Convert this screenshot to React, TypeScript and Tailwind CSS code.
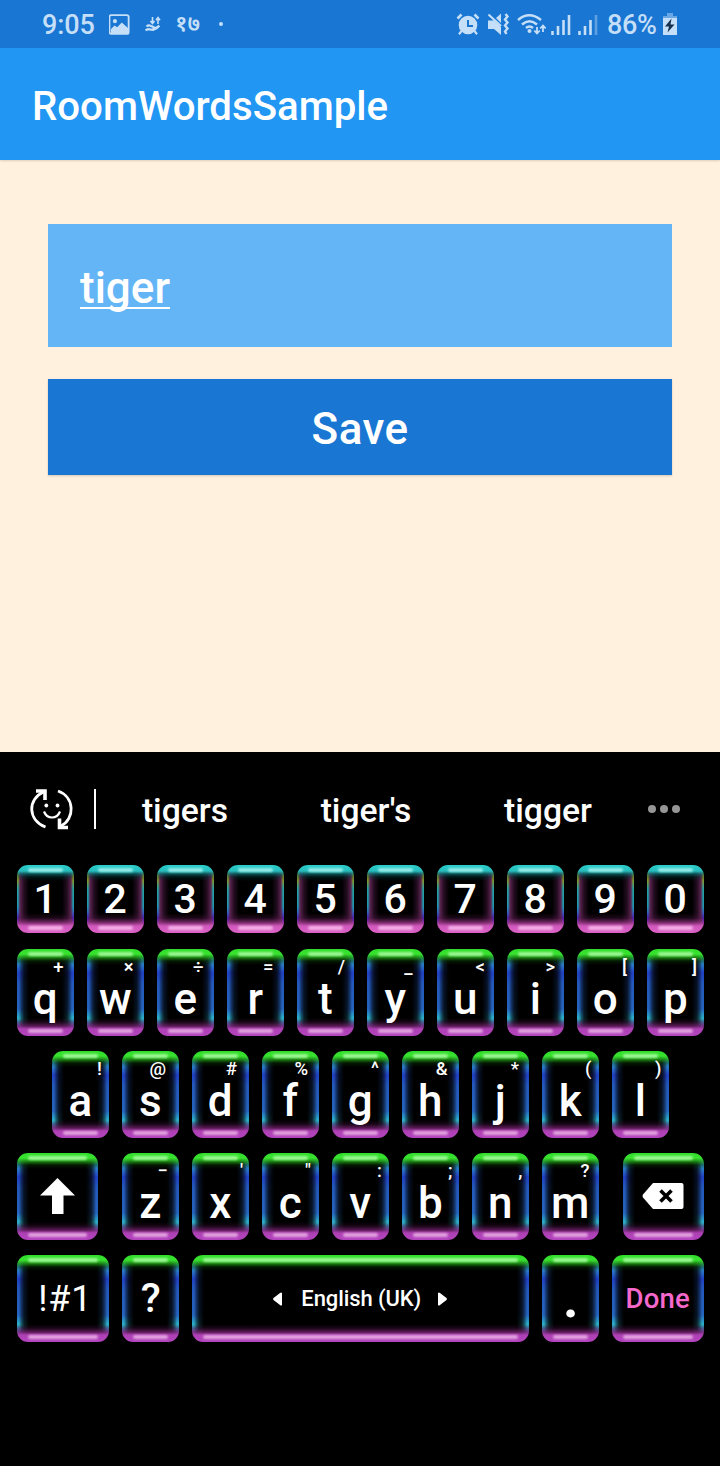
import React from "react";

const letterGlow =
  "bg-[linear-gradient(to_bottom,#30dc2c_0,#38e42e_5px,rgba(30,150,16,0.75)_9px,rgba(10,60,5,0.4)_12px,transparent_16px),linear-gradient(to_top,#b444c0_0,#ae40b4_7px,rgba(120,34,112,0.75)_10px,rgba(60,16,56,0.4)_14px,transparent_18px),linear-gradient(to_right,transparent_0,transparent_2px,rgba(0,0,0,0.4)_4px,rgba(0,0,0,0.8)_7px,#000_12px,#000_calc(100%-12px),rgba(0,0,0,0.8)_calc(100%-7px),rgba(0,0,0,0.4)_calc(100%-4px),transparent_calc(100%-2px),transparent_100%),linear-gradient(to_bottom,#2f9a8a_0,#2b86c8_14px,#2040c4_24px,#2358bc_34px,#2564bf_60px,#2cb8cc_70px,#7a50c8_80px)]";
const digitGlow =
  "bg-[linear-gradient(to_bottom,#2ad0cc_0,#27bcbc_6px,rgba(10,110,110,0.7)_9px,rgba(5,60,60,0.35)_12px,transparent_16px),linear-gradient(to_top,#dc62c8_0,#d058bc_7px,rgba(150,50,130,0.7)_11px,rgba(80,25,70,0.35)_15px,transparent_20px),linear-gradient(to_right,transparent_0,transparent_1px,#5a2450_3px,#240c20_7px,#000_12px,#000_calc(100%-12px),#240c20_calc(100%-7px),#5a2450_calc(100%-3px),transparent_calc(100%-1px),transparent_100%),linear-gradient(to_bottom,#2ad0cc_0,#a09a20_10px,#8d9a28_15px,#22a4a4_24px,#2096b0_42px,#4a20d8_54px,#b050d0_64px)]";

type KeyProps = {
  label?: string;
  hint?: string;
  hintRight?: string;
  digit?: boolean;
  width?: string;
  textStyle?: string;
  children?: React.ReactNode;
};

function Key({ label, hint, hintRight = "right-[9.5px]", digit = false, width = "w-[57px]", textStyle, children }: KeyProps) {
  const text = textStyle ?? (digit ? "text-[41px] leading-[69px] font-medium" : "mt-[29px] text-[44px] leading-[42px] font-medium");
  return (
    <div className={`flex shrink-0 items-start justify-center ${width} ${digit ? "h-[68px]" : "h-[87px]"}`}>
      <div
        className={`relative mr-[0.5px] flex flex-1 items-start justify-center rounded-[11px] text-white ${
          digit ? `h-[68px] ${digitGlow}` : `h-[86.5px] ${letterGlow}`
        }`}
      >
        <span className={`absolute inset-x-[11px] top-[3px] h-[4px] rounded-full blur-[1px] ${digit ? "bg-[#96ecea]" : "bg-[#9cf694]"}`} />
        <span className={`absolute inset-x-[11px] bottom-[3px] h-[4px] rounded-full blur-[1px] ${digit ? "bg-[#f4b0e6]" : "bg-[#e2a2de]"}`} />
        {hint && <span className={`absolute top-[7px] text-[18.5px] leading-[22px] font-medium ${hintRight}`}>{hint}</span>}
        {label && <span className={`relative block whitespace-nowrap ${text}`}>{label}</span>}
        {children}
      </div>
    </div>
  );
}

function StatusBar() {
  return (
    <div className="flex h-12 items-center bg-[#1976d2] text-[#c5dff8]">
      <span className="mt-[2px] ml-[42px] w-[54px] text-[27px] leading-[46px] font-medium tracking-[-0.1px]">9:05</span>
      <svg className="ml-[13px] h-[21px] w-[21px]" viewBox="0 0 23 22" preserveAspectRatio="none">
        <path d="M2.500 1.200h17q2 0 2 2v15.600q0 2-2 2h-17q-2 0-2-2V3.200q0-2 2-2Z" fill="none" stroke="currentColor" strokeWidth="2" />
        <circle cx="6.500" cy="7.500" r="2.200" fill="currentColor" />
        <path d="m2 16 4-4 3 2 5-5 7 6v5H2Z" fill="currentColor" />
      </svg>
      <svg className="ml-[15px] h-[16px] w-[18px]" viewBox="0 0 18 16" fill="none" stroke="currentColor">
        <path d="M7.500 1v6m-2-2 2 2.500L9.500 5M13 8V2m-2 2.200 2-2.700 2 2.700" strokeWidth="1.600" />
        <path d="M1.500 10.500c1.500-1.300 3-1.300 4.500-.6l2 .8c1.500.4 1 1.700-.5 1.500M9.500 12.800l5-3M.5 14.200l2.500-1 5 .6 3.500-1.600 2.500-2" strokeWidth="2.200" />
      </svg>
      <span className="ml-[12px] w-[26px] -translate-y-[2px] font-['Noto_Sans','Noto_Sans_Devanagari',sans-serif] text-[23px] leading-[44px] font-semibold">१७</span>
      <span className="ml-[18px] size-[4px] rounded-full bg-current" />
      <svg className="ml-[233px] h-[24px] w-[24px]" viewBox="0 0 24 24" fill="none" stroke="currentColor">
        <path d="m1.500 6.500 4-4M22.500 6.500l-4-4" strokeWidth="2.600" />
        <circle cx="12" cy="13" r="9.300" fill="currentColor" stroke="none" />
        <path d="m5.500 19-2.500 3.200M18.500 19l2.500 3.200" strokeWidth="2.200" />
        <path d="M12 8v6h5" stroke="#1976d2" strokeWidth="2" />
      </svg>
      <svg className="ml-[7px] h-[24px] w-[23px]" viewBox="0 0 23 24">
        <path d="M1 8.500h6l7 6.500v8l-7-6H1ZM9 6l5-4.500V11Z" fill="currentColor" />
        <path d="M1.500 2.500 14 14" stroke="currentColor" strokeWidth="2.200" />
        <path d="m18.500 2 2 2.500-2.500 3 2.500 3-2.500 3 2.500 3-2.500 3 1.500 2.500" fill="none" stroke="currentColor" strokeWidth="2.400" />
      </svg>
      <svg className="ml-[7px] h-[24px] w-[29px]" viewBox="0 0 29 24" fill="none" stroke="currentColor">
        <path d="M1 8q11-9.500 23 0M5 12.500q7.500-6.500 15 0M9 16q3.500-3 7 0" strokeWidth="2.400" />
        <circle cx="12.500" cy="19" r="2" fill="currentColor" stroke="none" />
        <path d="M20 15v6m-2.700-2.500 2.700 3 2.700-3M26 20v-6m-2.700 2.500 2.700-3 2.700 3" strokeWidth="1.800" />
      </svg>
      <svg className="mt-[1px] ml-[5px] h-[21px] w-[20px]" viewBox="0 0 20 21" stroke="currentColor" strokeWidth="2.600">
        <path d="M1.500 21v-4M7 21v-9M12.500 21V6M18 21V1" />
      </svg>
      <svg className="mt-[1px] ml-[7px] h-[21px] w-[20px]" viewBox="0 0 20 21" stroke="currentColor" strokeWidth="2.600">
        <path d="M1.500 21v-4M7 21v-9M12.500 21V6" />
        <path d="M18 21V1" opacity=".4" />
      </svg>
      <span className="mt-[2px] ml-[9px] w-[50px] text-[27px] leading-[46px] font-medium tracking-[-0.4px]">86%</span>
      <svg className="ml-[6px] h-[22px] w-[14px]" viewBox="0 0 14 22">
        <path d="M4 0h6v3h4v3H0V3h4Z" fill="#69a8e4" />
        <path d="M0 5h14v17H0Z" fill="currentColor" />
        <path d="M8.500 5.500 2 13.500h4L4.500 19.500l7-8H7.500Z" fill="#15314f" />
      </svg>
    </div>
  );
}

function Suggestions() {
  return (
    <div className="flex h-[113px] items-center text-[33.700px] font-medium text-white">
      <svg className="ml-[30px] h-[44px] w-[44px]" viewBox="0 0 44 44" fill="none" stroke="currentColor">
        <path d="M15.500 40C-2.500 33-2.500 12 13.500 5M28 4c17 6 17 28 3 35" strokeWidth="2.800" />
        <path d="M6 4h9v9M38 40.500h-8.500v-9" strokeWidth="3.600" />
        <circle cx="16.300" cy="18.500" r="1.900" fill="currentColor" stroke="none" />
        <circle cx="27.500" cy="18.500" r="1.900" fill="currentColor" stroke="none" />
        <path d="M14 24.500c3 8 13 8 16 0" strokeWidth="2.200" />
      </svg>
      <span className="ml-[20px] h-10 w-[2px] bg-white" />
      <span className="mt-[5px] w-[178px] text-center">tigers</span>
      <span className="mt-[5px] w-[184px] text-center">tiger's</span>
      <span className="mt-[5px] w-[180px] text-center">tigger</span>
      <span className="mt-px ml-[10px] flex gap-[4px]">
        <i className="size-[8px] rounded-full bg-[#969696]" />
        <i className="size-[8px] rounded-full bg-[#969696]" />
        <i className="size-[8px] rounded-full bg-[#969696]" />
      </span>
    </div>
  );
}

const topRow = [
  ["q", "+", "right-[10px]"], ["w", "×", "right-[10px]"], ["e", "÷", "right-[10px]"], ["r", "=", "right-[10px]"], ["t", "/", "right-[8.5px]"],
  ["y", "_", "right-[11px]"], ["u", "<", "right-[8.5px]"], ["i", ">", "right-[8.5px]"], ["o", "[", "right-[6.5px]"], ["p", "]", "right-[6.5px]"],
];
const homeRow = [
  ["a", "!", "right-[6.5px]"], ["s", "@", "right-[12.5px]"], ["d", "#", "right-[11.5px]"], ["f", "%", "right-[10.5px]"], ["g", "^", "right-[9.5px]"],
  ["h", "&", "right-[11px]"], ["j", "*", "right-[9.5px]"], ["k", "(", "right-[7px]"], ["l", ")", "right-[7px]"],
];
const lowRow = [
  ["z", "−", "right-[10.5px]"], ["x", "'", "right-[5.5px]"], ["c", "\"", "right-[7.5px]"], ["v", ":", "right-[6.5px]"], ["b", ";", "right-[6px]"],
  ["n", ",", "right-[6px]"], ["m", "?", "right-[9px]"],
];

function Keyboard() {
  return (
    <div className="h-[714px] bg-black">
      <Suggestions />
      <div className="flex flex-col gap-[15px] pl-[17px]">
        <div className="mb-[1px] flex gap-[13px]">
          {"1234567890".split("").map((d) => <Key key={d} label={d} digit />)}
        </div>
        <div className="flex gap-[13px]">
          {topRow.map(([l, h, r]) => <Key key={l} label={l} hint={h} hintRight={r} />)}
        </div>
        <div className="flex gap-[13px] pl-[35px]">
          {homeRow.map(([l, h, r]) => <Key key={l} label={l} hint={h} hintRight={r} />)}
        </div>
        <div className="flex gap-[24px]">
          <Key width="w-[81px]">
            <svg className="mt-[25px] ml-[1px] h-[36px] w-[36px]" viewBox="0 0 36 36">
              <path d="M17.500 0 35 17.500H23.500V36H12V17.500H0Z" fill="white" />
            </svg>
          </Key>
          <div className="flex gap-[13px]">
            {lowRow.map(([l, h, r]) => <Key key={l} label={l} hint={h} hintRight={r} />)}
          </div>
          <Key width="w-[81px]">
            <svg className="mt-[30px] h-[26px] w-[42px]" viewBox="0 0 42 26">
              <path d="M11 0h28.500q2 0 2 2v22q0 2-2 2H11L1 14.500q-1-1.500 0-3Z" fill="white" />
              <path d="m18.500 7.500 11 11M29.500 7.500l-11 11" stroke="black" strokeWidth="3.600" />
            </svg>
          </Key>
        </div>
        <div className="flex gap-[13px]">
          <Key width="w-[92px]" label="!#1" textStyle="ml-[5px] text-[36px] leading-[88px] font-normal tracking-[0.8px]" />
          <Key label="?" textStyle="ml-px text-[41px] leading-[87px] font-medium" />
          <Key width="w-[337px]">
            <div className="flex h-[87px] items-center gap-[19px] text-[22px] font-medium">
              <svg className="h-[14px] w-[9px]" viewBox="0 0 9 14"><path d="M9 1v12q-1 1-2 0L.5 8q-.8-1 0-2L7 1q1-1 2 0Z" fill="white" /></svg>
              <span className="w-[120px] text-center tracking-[-0.1px] whitespace-nowrap">English (UK)</span>
              <svg className="-ml-[2px] h-[14px] w-[9px]" viewBox="0 0 9 14"><path d="M0 1v12q1 1 2 0l6.500-5q.8-1 0-2L2 1Q1 0 0 1Z" fill="white" /></svg>
            </div>
          </Key>
          <Key label="." textStyle="ml-px text-[62px] leading-[82px] font-medium" />
          <Key width="w-[92px]" label="Done" textStyle="text-[27.5px] leading-[88px] font-medium tracking-[0.2px] text-[#f569cc]" />
        </div>
      </div>
    </div>
  );
}

export default function App() {
  return (
    <div className="h-[1466px] w-[720px] overflow-hidden bg-[#fff1de] font-[Roboto,sans-serif]">
      <StatusBar />
      <header className="relative h-28 bg-[#2196f3] pl-8 text-[40.200px] leading-[118px] font-medium text-white shadow-[0_1px_2px_rgba(0,0,0,0.15)]">
        RoomWordsSample
      </header>
      <main className="flex h-[592px] flex-col gap-8 px-12 pt-16">
        <div className="flex h-[123px] items-center bg-[#64b5f6] px-8 text-[44px] font-medium text-white">
          <span className="mt-[5px] underline decoration-2 underline-offset-[4px] [text-decoration-skip-ink:none]">tiger</span>
        </div>
        <button className="h-24 bg-[#1976d2] pt-[4px] text-[44px] font-medium tracking-[0.4px] text-white shadow-[0_1px_2px_rgba(0,0,0,0.18)]">
          Save
        </button>
      </main>
      <Keyboard />
    </div>
  );
}
